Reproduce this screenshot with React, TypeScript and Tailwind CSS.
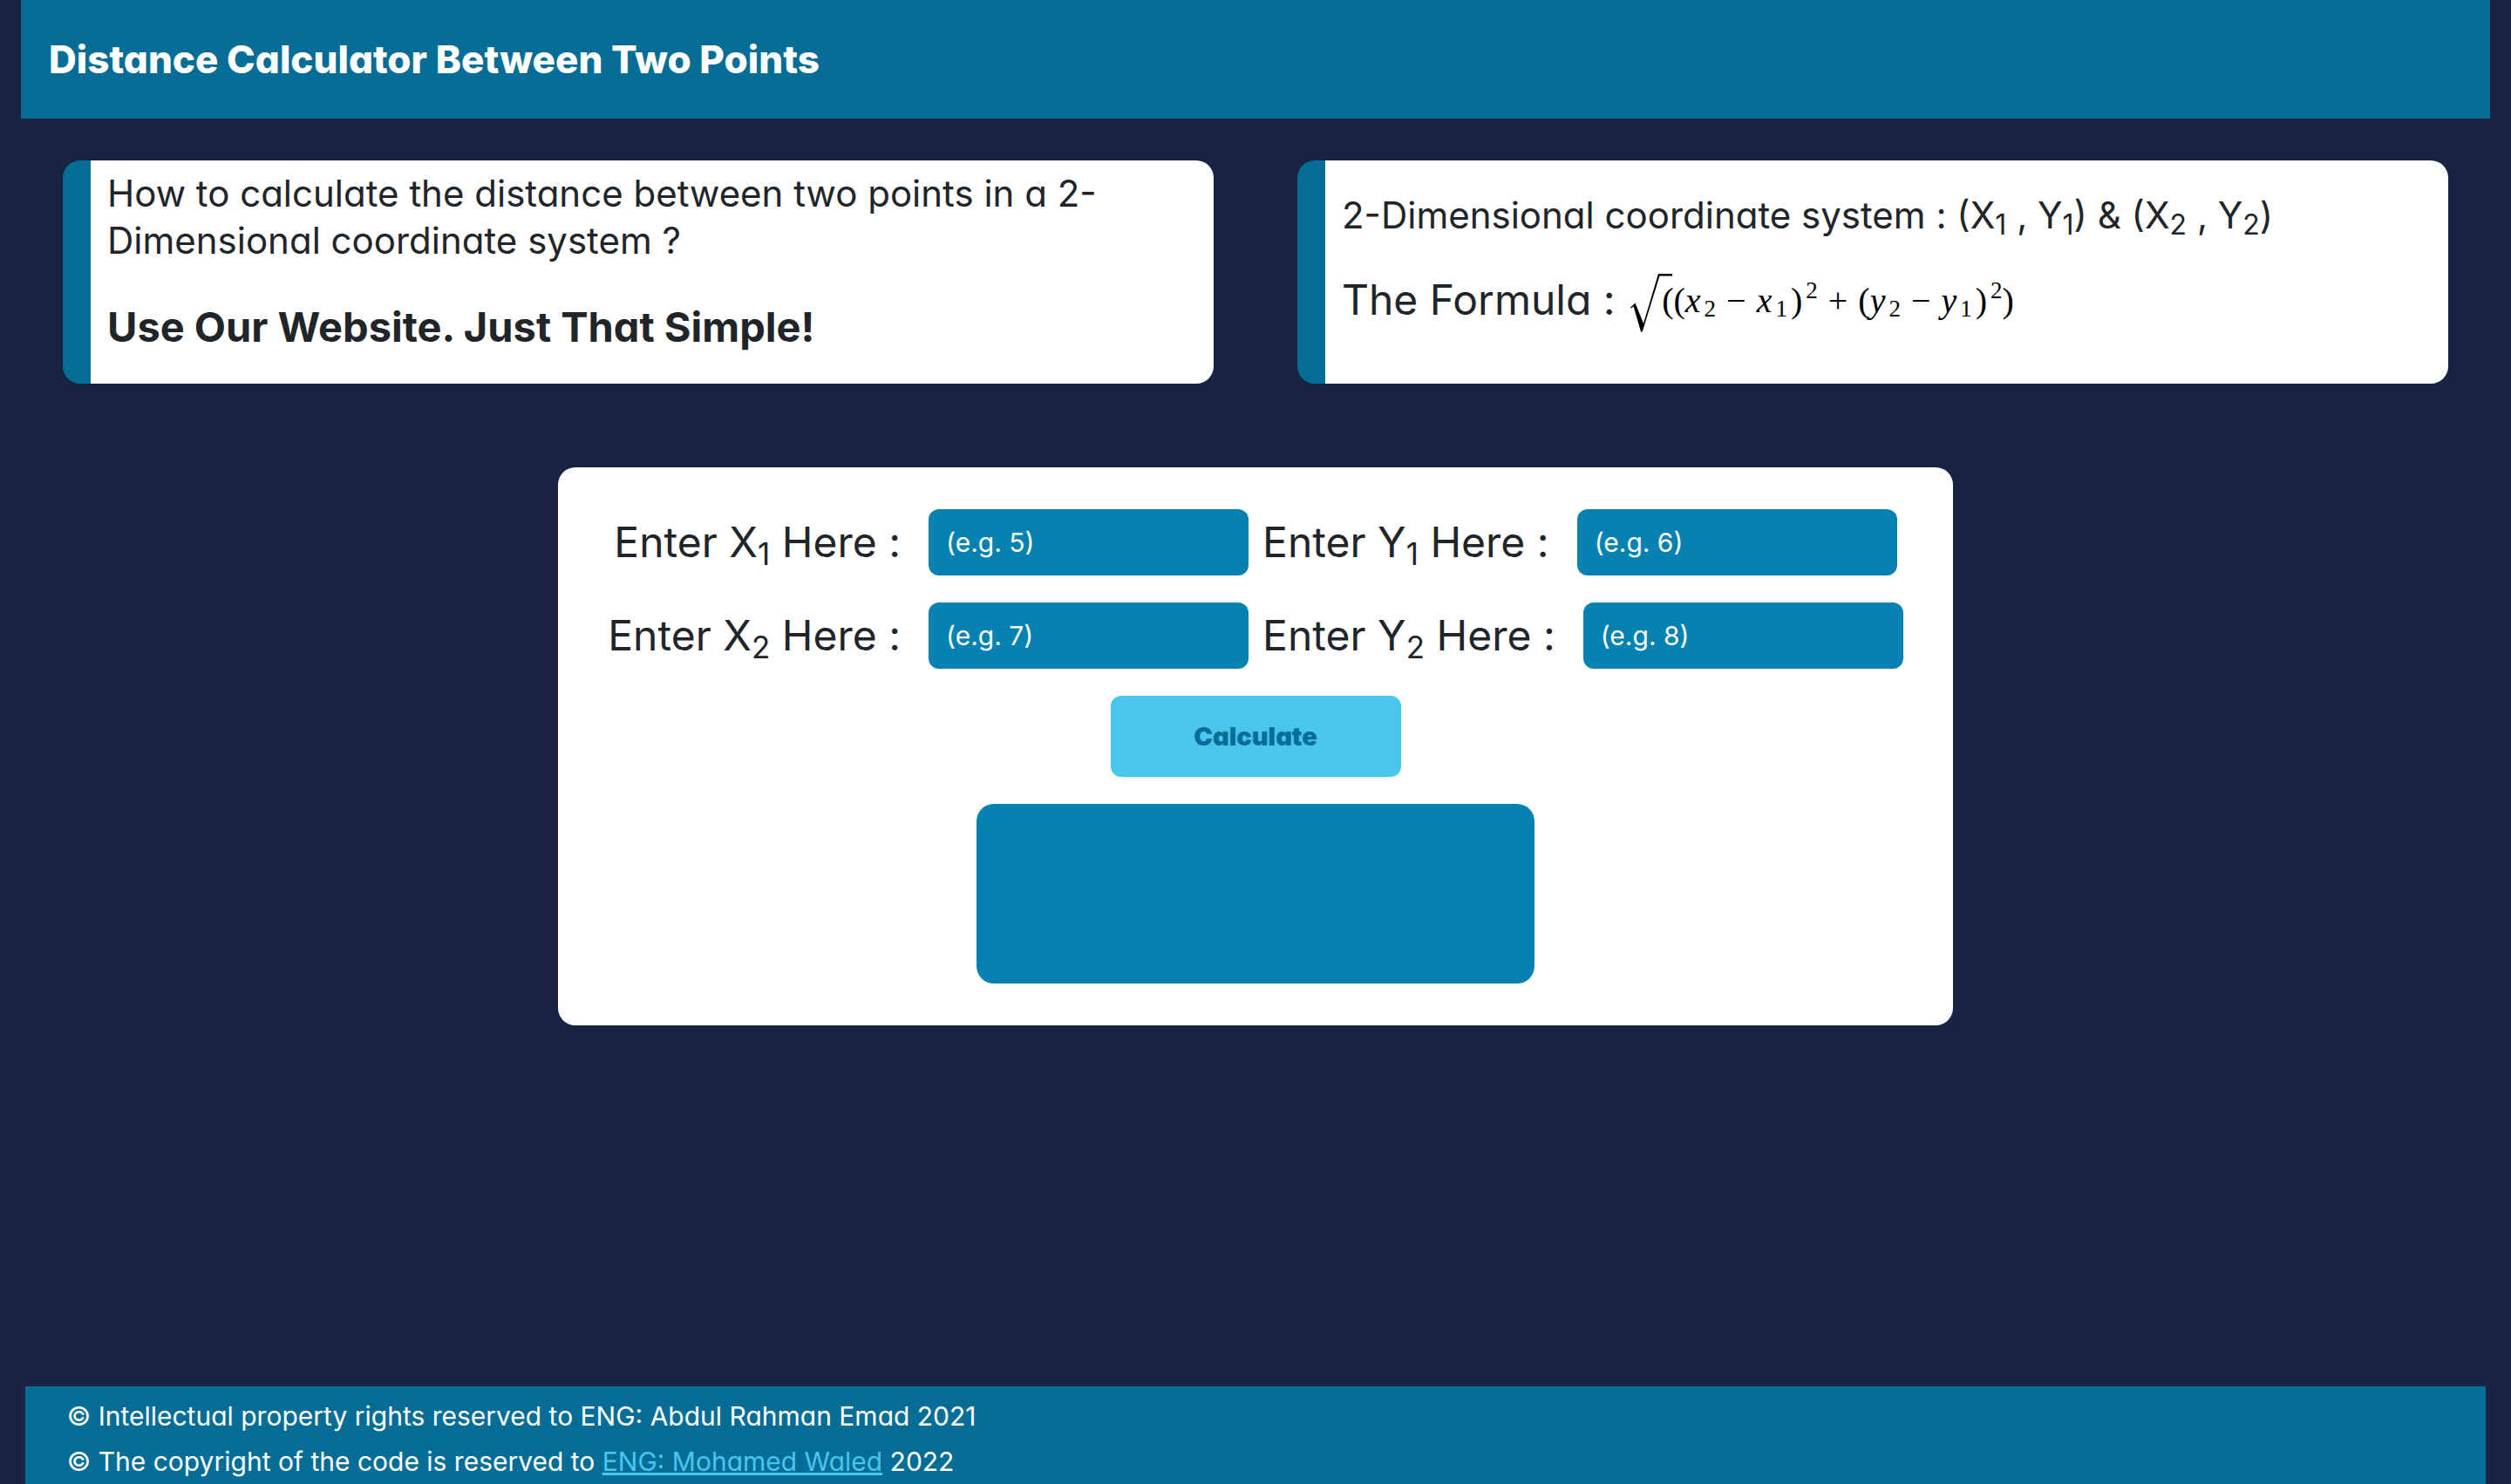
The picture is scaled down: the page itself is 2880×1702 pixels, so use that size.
import { useState, type FormEvent, type ReactNode } from 'react';

type FieldProps = {
  id: string;
  letter: string;
  index: number;
  example: number;
  value: string;
  onChange: (value: string) => void;
};

function Field({ id, letter, index, example, value, onChange }: FieldProps) {
  return (
    <div className="flex items-center gap-8">
      <label htmlFor={id} className="text-[48px] leading-[76px] whitespace-nowrap">
        Enter {letter}
        <sub className="static align-[-9px] text-[35px] leading-none">{index}</sub> Here :
      </label>
      <input
        id={id}
        type="text"
        inputMode="decimal"
        value={value}
        onChange={(event) => onChange(event.target.value)}
        placeholder={`(e.g. ${example})`}
        className="h-[76px] w-[367px] rounded-xl bg-[#0582b2] px-5 text-[30px] text-white outline-none placeholder:text-white placeholder:opacity-100"
      />
    </div>
  );
}

function InfoCard({ children }: { children: ReactNode }) {
  return (
    <article className="min-h-64 rounded-[20px] border-l-[32px] border-[#056d96] bg-white pr-4 pl-[19px]">
      {children}
    </article>
  );
}

function HeadingSub({ children }: { children: ReactNode }) {
  return <sub className="static align-[-7px] text-[32px] leading-none">{children}</sub>;
}

function MathSub({ children }: { children: ReactNode }) {
  return <sub className="static ml-1 align-[-5px] text-[27px] leading-none not-italic">{children}</sub>;
}

function MathSup({ children }: { children: ReactNode }) {
  return <sup className="static ml-1 align-[16px] text-[27px] leading-none">{children}</sup>;
}

function Formula() {
  return (
    <span className="ml-1 align-[3px] font-['Liberation_Serif',serif] text-[40px] leading-none whitespace-nowrap text-black">
      <svg
        viewBox="0 0 48 67"
        className="inline-block h-[67px] w-12 align-[-23px]"
        role="img"
        aria-label="square root"
      >
        <path d="M0 38.5 5.5 33.5 15 57 32 0H48V2.5H33.5L13.7 66.5H12L3.6 37.4 1 39.6Z" />
      </svg>
      <span className="-ml-3">((</span>
      <i>x</i>
      <MathSub>2</MathSub>
      <span className="mx-3">−</span>
      <i>x</i>
      <MathSub>1</MathSub>
      <span className="ml-1">)</span>
      <MathSup>2</MathSup>
      <span className="mx-3">+</span>
      <span>(</span>
      <i>y</i>
      <MathSub>2</MathSub>
      <span className="mx-3">−</span>
      <i>y</i>
      <MathSub>1</MathSub>
      <span className="ml-1">)</span>
      <MathSup>2</MathSup>
      <span>)</span>
    </span>
  );
}

export default function App() {
  const [x1, setX1] = useState('');
  const [y1, setY1] = useState('');
  const [x2, setX2] = useState('');
  const [y2, setY2] = useState('');
  const [result, setResult] = useState('');

  const calculate = (event: FormEvent) => {
    event.preventDefault();
    const distance = Math.hypot(Number(x2) - Number(x1), Number(y2) - Number(y1));
    setResult(Number.isNaN(distance) ? '' : String(distance));
  };

  return (
    <div className="flex min-h-screen flex-col bg-[#192344] font-['Inter',sans-serif] text-[#212529] [font-feature-settings:'cv11']">
      <header className="mx-6 flex min-h-[136px] items-center bg-[#056d96] px-8">
        <h1 className="text-[44px] leading-[54px] font-extrabold text-white">Distance Calculator Between Two Points</h1>
      </header>

      <main>
        <section className="mx-[72px] mt-12 grid grid-cols-2 gap-24">
          <InfoCard>
            <h2 className="pt-[11px] text-[42px] leading-[54px]">
              How to calculate the distance between two points in a 2-Dimensional coordinate system ?
            </h2>
            <p className="mt-11 text-[47px] leading-14 font-bold">Use Our Website. Just That Simple!</p>
          </InfoCard>
          <InfoCard>
            <h2 className="pt-9 text-[42px] leading-[54px]">
              2-Dimensional coordinate system : (X<HeadingSub>1</HeadingSub> , Y<HeadingSub>1</HeadingSub>) &amp; (X
              <HeadingSub>2</HeadingSub> , Y<HeadingSub>2</HeadingSub>)
            </h2>
            <p className="mt-10 text-[48px] leading-14">
              The Formula : <Formula />
            </p>
          </InfoCard>
        </section>

        <form
          onSubmit={calculate}
          className="mx-auto mt-24 flex w-[1600px] max-w-full flex-col items-center gap-[31px] rounded-[20px] bg-white py-12"
        >
          <div className="flex gap-4">
            <Field id="x1" letter="X" index={1} example={5} value={x1} onChange={setX1} />
            <Field id="y1" letter="Y" index={1} example={6} value={y1} onChange={setY1} />
          </div>
          <div className="flex gap-4">
            <Field id="x2" letter="X" index={2} example={7} value={x2} onChange={setX2} />
            <Field id="y2" letter="Y" index={2} example={8} value={y2} onChange={setY2} />
          </div>
          <button
            type="submit"
            className="h-[93px] w-[333px] rounded-xl bg-[#48c6ee] text-[29px] font-black text-[#056d96]"
          >
            Calculate
          </button>
          <output
            htmlFor="x1 y1 x2 y2"
            className="flex h-[206px] w-[640px] items-center justify-center rounded-[20px] bg-[#0582b2] text-[48px] text-white"
          >
            {result}
          </output>
        </form>
      </main>

      <footer className="mx-[1%] mt-auto bg-[#056d96] pt-2 pl-12 text-[30px] leading-[52px] text-white">
        <p>© Intellectual property rights reserved to ENG: Abdul Rahman Emad 2021</p>
        <p>
          © The copyright of the code is reserved to{' '}
          <a href="#mohamed-waled" className="text-[#48c6ee] underline">
            ENG: Mohamed Waled
          </a>{' '}
          2022
        </p>
      </footer>
    </div>
  );
}
